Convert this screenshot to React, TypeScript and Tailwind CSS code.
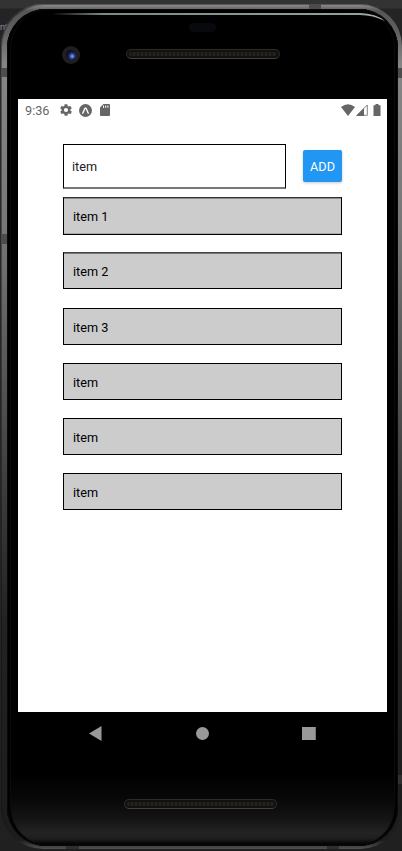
import React from 'react';

type Row = { label: string; box: string };

const rows: Row[] = [
  { label: 'item 1', box: '-mb-px h-[38px] pt-px border-t-[#303030] shadow-[inset_0_1px_0_#8c8c8c,inset_0_-1px_0_#aaaaaa]' },
  { label: 'item 2', box: 'mb-px h-[37px] pt-[2px] border-t-[#444444] shadow-[inset_0_1px_0_#777777]' },
  { label: 'item 3', box: 'h-[37px] pt-[2px]' },
  { label: 'item', box: 'h-[37px] pt-[2px]' },
  { label: 'item', box: 'h-[37px] pt-[2px]' },
  { label: 'item', box: 'h-[37px] pt-[2px]' },
];

function Speaker({ className }: { className: string }) {
  return (
    <div className={`h-[10px] rounded-full border border-[#2c2b29] border-b-[#434240] bg-[#12110e] p-[2px] ${className}`}>
      <div className="h-full rounded-full bg-[repeating-linear-gradient(90deg,#25231f_0px,#25231f_2px,#191814_2px,#191814_4px)]" />
    </div>
  );
}

function StatusBar() {
  return (
    <div className="flex h-[22px] items-center justify-between pl-[7px] pr-[6px] text-[#666666]">
      <div className="flex items-center">
        <span className="w-[34px] pt-px text-[12.7px] leading-[22px]">9:36</span>
        <div className="flex items-center gap-[6px]">
          <svg className="size-[14px]" viewBox="0 0 24 24" fill="currentColor">
            <path d="M19.4 13c0-.3.1-.6.1-1s0-.7-.1-1l2.1-1.7c.2-.1.2-.4.1-.6l-2-3.5c-.1-.2-.4-.3-.6-.2l-2.5 1c-.5-.4-1.1-.7-1.7-1L14.5 2.4c0-.2-.3-.4-.5-.4h-4c-.3 0-.5.2-.5.4L9.1 5c-.6.3-1.2.6-1.7 1l-2.5-1c-.2-.1-.5 0-.6.2l-2 3.5c-.1.2-.1.5.1.6L4.6 11c0 .3-.1.6-.1 1s0 .7.1 1l-2.1 1.7c-.2.1-.2.4-.1.6l2 3.5c.1.2.4.3.6.2l2.5-1c.5.4 1.1.7 1.7 1l.4 2.6c0 .2.2.4.5.4h4c.3 0 .5-.2.5-.4l.4-2.6c.6-.3 1.2-.6 1.7-1l2.5 1c.2.1.5 0 .6-.2l2-3.5c.1-.2.1-.5-.1-.6L19.4 13zM12 15.600a3.600 3.600 0 1 1 0-7.200 3.600 3.600 0 0 1 0 7.200z" />
          </svg>
          <svg className="size-[13px]" viewBox="0 0 14 14">
            <circle cx="7" cy="7" r="7" fill="currentColor" />
            <path d="M4 9.800C5.300 8.200 5.700 4.300 7 4.300S8.700 8.200 10 9.800" fill="none" stroke="white" strokeWidth="1.500" strokeLinecap="round" />
          </svg>
          <svg className="ml-[2px] h-[12px] w-[10px]" viewBox="0 0 10 12">
            <path d="M3.500 0H9q1 0 1 1v10q0 1-1 1H1q-1 0-1-1V3.500z" fill="currentColor" />
            <path d="M3.500 1.500v2.300M5.700 1.500v2.300M7.900 1.500v2.300" stroke="white" strokeWidth="1" />
          </svg>
        </div>
      </div>
      <div className="flex items-center gap-px">
        <svg className="h-[12px] w-[14px]" viewBox="0 0 14 12">
          <path d="M0 3Q7-2.300 14 3L7 12z" fill="currentColor" />
        </svg>
        <svg className="h-[12px] w-[12px]" viewBox="0 0 12 12">
          <path d="M11.300 1v10.300H1z" fill="white" stroke="currentColor" strokeWidth=".8" />
          <path d="M0 12L8 4v8z" fill="currentColor" />
        </svg>
        <svg className="ml-1 h-[12px] w-[8px]" viewBox="0 0 8 12">
          <path d="M2.500 0h3v1.200h2V12h-7V1.200h2z" fill="currentColor" />
        </svg>
      </div>
    </div>
  );
}

function Screen() {
  return (
    <div className="h-[613px] w-[369px] bg-white">
      <StatusBar />
      <main className="flex flex-col gap-2 px-[45px] pt-[23px] text-[12.7px] text-black">
        <div className="flex items-start justify-between">
          <div className="flex h-[45px] w-[223px] items-center border border-b-2 border-black border-b-[#777777] pl-2 pt-[2px] text-[#222222]">
            item
          </div>
          <button className="mt-1.5 h-8 w-[39px] rounded-[2px] bg-[#2196f3] pt-px text-white shadow-[0_1px_3px_rgba(0,0,0,0.22)]">
            ADD
          </button>
        </div>
        <ul className="flex flex-col gap-[18px]">
          {rows.map((row, i) => (
            <li key={i} className={`flex items-center border border-black bg-[#cccccc] pl-[9px] ${row.box}`}>
              {row.label}
            </li>
          ))}
        </ul>
      </main>
    </div>
  );
}

function NavBar() {
  return (
    <nav className="flex h-[43px] w-full items-center gap-[94px] pl-[82px] text-[#999999]">
      <svg className="h-[15px] w-[13px]" viewBox="0 0 13 15">
        <path d="M12.500 0v15L0 7.500z" fill="currentColor" />
      </svg>
      <div className="size-[13px] rounded-full bg-[#999999]" />
      <div className="-ml-px size-[13px] bg-[#999999] shadow-[1px_0_0_#777777]" />
    </nav>
  );
}

/* Antenna bands in the metal edge and the highlight along the top glass. */
function EdgeDetails() {
  return (
    <svg className="pointer-events-none absolute inset-0 size-full" viewBox="0 0 401 845">
      <defs>
        <linearGradient id="rim" gradientUnits="userSpaceOnUse" x1="51" x2="389" y1="0" y2="0">
          <stop offset="0" stopColor="#8e9999" stopOpacity="0" />
          <stop offset=".15" stopColor="#7c8989" />
          <stop offset=".9" stopColor="#91a1a2" />
          <stop offset="1" stopColor="#adb6b6" />
        </linearGradient>
      </defs>
      <path d="M0 64h6v9H0zM0 230h6v10H0zM397 64h4v10h-4zM308 0h12v5h-12z" fill="#4c4c4c" />
      <path d="M397 771h4v9h-4zM65 842h13v3H65zM326 842h12v3h-12z" fill="#302e2f" />
      <path d="M51 9h308q16 .5 25 8-12-6-25-6H51z" fill="url(#rim)" />
      <rect x="188" y="19" width="27" height="9" rx="4.500" fill="#08090d" />
    </svg>
  );
}

export default function App() {
  return (
    <div className="relative h-[851px] w-[402px] overflow-hidden bg-[linear-gradient(#333333_0px,#333333_8px,#242424_9px,#242424_40px,#2b2b2b_60px,#202020_100%)] pl-px pt-1 font-['Roboto',sans-serif]">
      <span className="absolute left-0 top-[19px] font-['Liberation_Sans',sans-serif] text-[9px] leading-[16px] text-[#9297a0]">nt</span>
      <div className="relative h-[845px] w-[401px] rounded-[42px] bg-[linear-gradient(#929292_0px,#555555_7px,#606060_28px,#858585_60px,#777777_220px,#5c5c5c_340px,#393939_500px,#222222_620px,#1c1c1c_836px,#555052_845px)] pb-[3px] pl-[6px] pr-1 pt-[5px] shadow-[inset_1px_1px_0_rgba(10,10,10,0.4)]">
        <div className="flex h-full flex-col items-center rounded-[39px] bg-[linear-gradient(#000000_0px,#000000_765px,#080808_790px,#141414_810px,#232323_824px,#1d1d1d_830px,#080808_834px,#000000_837px)] pt-[37px] shadow-[inset_0_0_0_1px_#090909,inset_3px_0_0_#000000,inset_4px_0_1px_#0d0d0d,inset_-3px_0_0_#000000,inset_-4px_0_1px_#0d0d0d]">
          <div className="flex h-[53px] w-full items-start gap-[46px] pl-[55px]">
            <div className="flex size-[18px] items-center justify-center rounded-full bg-[#201e1f]">
              <div className="size-[10px] rounded-full bg-[radial-gradient(circle_at_62%_62%,#9ab2ff_0px,#344fae_2px,#121d49_4px,#080a14_6px)]" />
            </div>
            <Speaker className="mt-[3px] w-[154px]" />
          </div>
          <Screen />
          <NavBar />
          <div className="w-full pl-[117px] pt-[44px]">
            <Speaker className="w-[153px]" />
          </div>
        </div>
        <EdgeDetails />
      </div>
    </div>
  );
}
